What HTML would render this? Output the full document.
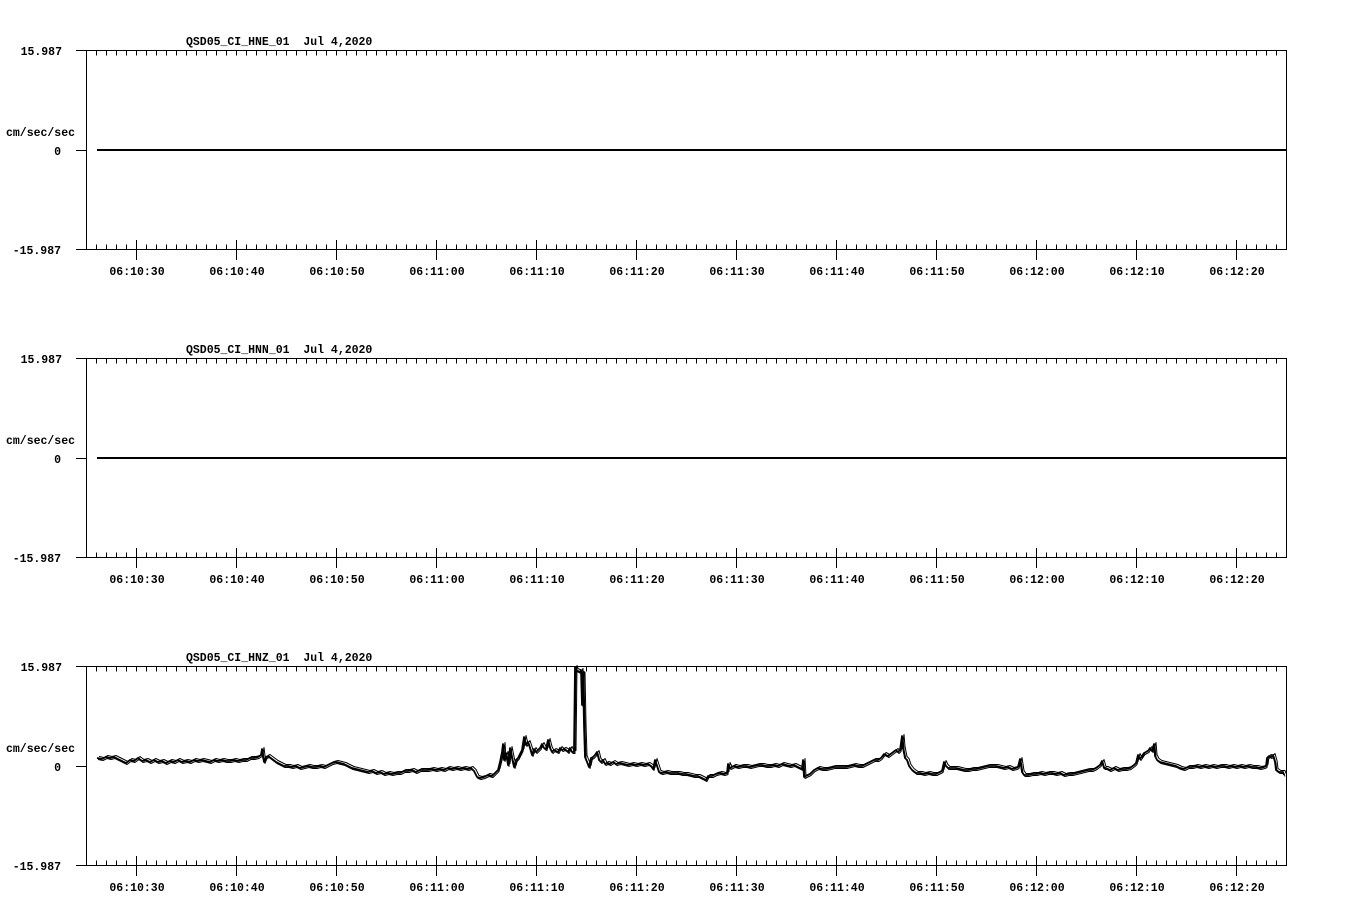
<!DOCTYPE html>
<html><head><meta charset="utf-8"><style>
html,body{margin:0;padding:0;background:#fff;width:1358px;height:924px;overflow:hidden}
svg{display:block}
text{font-family:"Liberation Mono",monospace;font-weight:bold;font-size:11.5px;fill:#000;white-space:pre}
</style></head><body>
<svg width="1358" height="924" xmlns="http://www.w3.org/2000/svg">
<defs>
<g id="axes" shape-rendering="crispEdges" stroke="#000" fill="none">
  <path d="M86.5 50V249.5M1286.5 50V249.5M76 50.5H1287M76 249.5H1287M76 150.5H86" stroke-width="1"/>
  <line x1="96" y1="53" x2="1287" y2="53" stroke-width="5" stroke-dasharray="1 9"/>
  <line x1="96" y1="247" x2="1287" y2="247" stroke-width="5" stroke-dasharray="1 9"/>
  <line x1="136" y1="250" x2="1287" y2="250" stroke-width="20" stroke-dasharray="1 99"/>
</g>
<g id="labels">
  <text x="62" y="55" text-anchor="end">15.987</text>
  <text x="6" y="136">cm/sec/sec</text>
  <text x="61" y="155" text-anchor="end">0</text>
  <text x="61" y="254" text-anchor="end">-15.987</text>
  <g text-anchor="middle">
  <text x="137" y="275">06:10:30</text><text x="237" y="275">06:10:40</text><text x="337" y="275">06:10:50</text>
  <text x="437" y="275">06:11:00</text><text x="537" y="275">06:11:10</text><text x="637" y="275">06:11:20</text>
  <text x="737" y="275">06:11:30</text><text x="837" y="275">06:11:40</text><text x="937" y="275">06:11:50</text>
  <text x="1037" y="275">06:12:00</text><text x="1137" y="275">06:12:10</text><text x="1237" y="275">06:12:20</text>
  </g>
</g>
<polyline id="tr" fill="none" stroke="#000" stroke-linejoin="round" points="
97,758 102,759 106,757 110,758 114,757 118,759 122,761 126,763 130,760 134,761 138,758 142,761 146,760 150,762 154,760 158,762 162,761 166,763 170,761 174,762 178,760 182,762 186,761 190,762 194,760 198,761 202,760 206,761 210,762 214,760 218,761 222,760 226,761 230,761 234,760 238,761 242,760 246,760 250,758 254,758 258,757 261,755 262,749 263,757 264,762 266,757 268,756 272,759 276,762 280,764 284,766 288,766 292,767 296,766 300,768 304,767 308,766 312,767 316,767 320,766 324,767 328,765 332,763 336,762 340,763 344,764 348,766 352,768 356,769 360,770 364,771 368,772 372,771 376,773 380,772 384,774 388,773 392,774 396,773 400,773 404,771 408,771 412,770 416,772 420,770 424,770 428,770 432,769 436,770 440,769 444,770 448,768 452,769 456,768 460,769 464,768 468,769 471,768 474,771 477,777 480,778 484,777 488,775 492,776 495,773 498,770 500,762 502,752 503,744 504,760 506,753 508,765 510,748 512,758 514,767 516,760 518,758 520,754 522,750 524,737 526,745 528,742 530,748 532,755 534,749 536,752 538,750 540,748 542,744 544,748 546,749 548,740 550,748 552,752 554,750 556,751 558,752 560,748 562,750 564,749 566,750 568,752 570,748 572,752 574,752 575,667 576,670 578,671 580,672 581,670 582,705 582,673 583,674 584,725 585,757 587,762 589,767 591,758 593,757 595,755 597,752 599,760 601,762 603,760 605,764 607,763 610,764 613,762 616,764 620,763 624,764 628,765 632,764 636,765 640,764 644,765 648,764 651,766 653,769 655,760 657,766 659,772 662,773 666,772 670,773 674,773 678,773 682,774 686,774 690,775 694,776 698,776 702,778 706,780 708,776 712,776 716,774 720,773 724,774 727,773 728,764 730,768 734,766 738,767 742,766 746,766 750,767 754,766 758,765 762,765 766,766 770,766 774,765 778,766 782,764 786,765 790,766 794,765 798,767 802,769 803,760 804,777 806,776 810,774 814,770 818,768 822,769 826,769 830,768 834,767 838,767 842,767 846,767 850,766 854,765 858,766 862,766 866,764 870,762 874,760 878,760 881,758 884,754 888,756 892,753 896,750 898,752 900,750 902,736 903,748 905,758 907,760 909,766 912,770 916,773 920,773 924,774 928,773 932,774 936,774 940,772 942,771 944,762 946,766 948,768 952,768 956,768 960,769 964,770 968,770 972,769 976,769 980,768 984,767 988,766 992,766 996,766 1000,767 1004,768 1008,767 1012,769 1016,768 1018,767 1020,759 1022,772 1024,775 1028,775 1032,774 1036,774 1040,773 1044,774 1048,773 1052,773 1056,774 1060,773 1064,775 1068,774 1072,774 1076,773 1080,772 1084,771 1088,770 1092,770 1096,768 1100,765 1102,761 1104,768 1106,768 1110,770 1114,768 1118,770 1122,769 1126,769 1130,768 1134,765 1136,763 1138,755 1140,759 1142,756 1144,753 1146,752 1148,751 1150,748 1152,751 1154,744 1155,756 1157,760 1160,762 1164,763 1168,764 1172,765 1176,766 1180,768 1184,769 1188,767 1192,767 1196,766 1200,767 1204,766 1208,767 1212,766 1216,767 1220,766 1224,766 1228,767 1232,766 1236,767 1240,766 1244,767 1248,766 1252,767 1256,767 1260,768 1264,767 1266,766 1267,758 1269,756 1271,757 1273,755 1275,762 1276,770 1279,772 1283,772 1284,775"/>
</defs>

<g>
<use href="#axes"/><use href="#labels"/>
<text x="186" y="45">QSD05_CI_HNE_01  Jul 4,2020</text>
<rect x="97" y="149" width="1189" height="2" fill="#000"/>
</g>
<g transform="translate(0,308)">
<use href="#axes"/><use href="#labels"/>
<text x="186" y="45">QSD05_CI_HNN_01  Jul 4,2020</text>
<rect x="97" y="149" width="1189" height="2" fill="#000"/>
</g>
<g transform="translate(0,616)">
<use href="#axes"/><use href="#labels"/>
<text x="186" y="45">QSD05_CI_HNZ_01  Jul 4,2020</text>
</g>
<use href="#tr" stroke-width="1.8"/>
<use href="#tr" stroke-width="1" transform="translate(2,-1.5)"/>
<use href="#tr" stroke-width="1" transform="translate(1,1.5)"/>
</svg>
</body></html>
